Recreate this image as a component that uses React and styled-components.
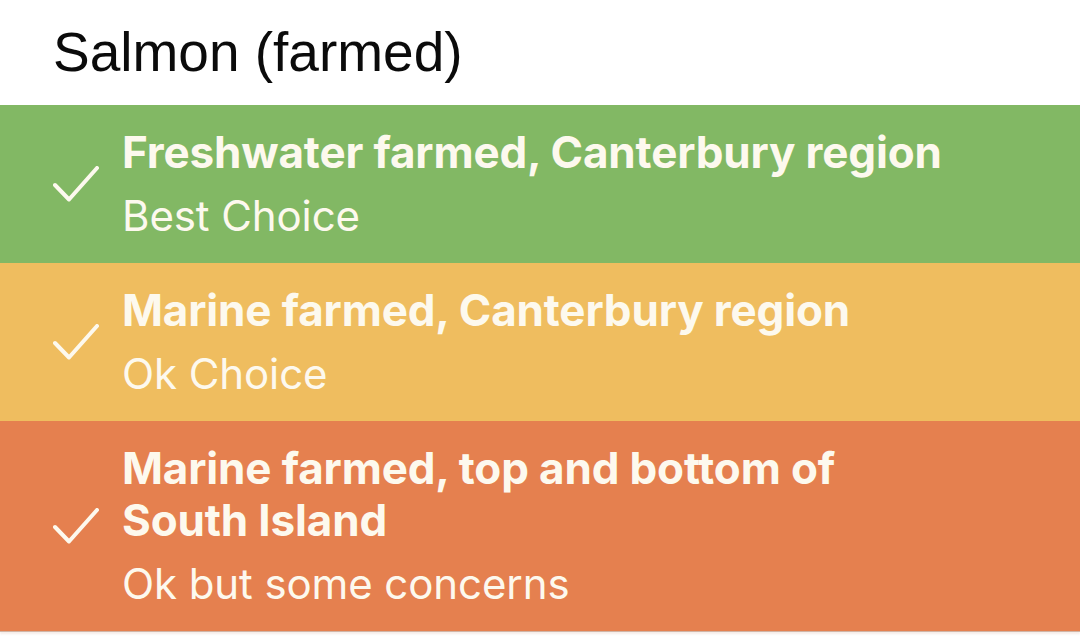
import React from "react";
import styled, { createGlobalStyle } from "styled-components";

const Global = createGlobalStyle`
  html, body { margin: 0; padding: 0; background: #ffffff; }
  body { font-family: Inter, "Liberation Sans", sans-serif; }
`;

const Page = styled.div`
  width: 1080px;
  height: 644px;
  background: #ffffff;
  overflow: hidden;
`;

const Header = styled.h1`
  margin: 0;
  padding: 22px 0 23px 53px;
  font-family: "Liberation Sans", Arial, sans-serif;
  font-weight: 400;
  font-size: 55px;
  line-height: 60px;
  color: #0b0b0b;
`;

const List = styled.div`
  display: flex;
  flex-direction: column;
  border-bottom: 1px solid rgba(150, 90, 60, 0.45);
  box-shadow: 0 2px 2px rgba(200, 150, 130, 0.18);
`;

const Row = styled.div`
  display: flex;
  align-items: center;
  background: ${(p) => p.$bg};
  padding: 21px 0 21px 53px;
  color: #fdf9ee;
`;

const CheckWrap = styled.div`
  width: 46px;
  flex: none;
  display: flex;
  align-items: center;
  margin-right: 23px;
`;

const Texts = styled.div`
  display: flex;
  flex-direction: column;
  gap: 12px;
  width: 835px;
`;

const Title = styled.div`
  font-weight: 700;
  font-size: 44px;
  line-height: 52px;
  letter-spacing: -0.15px;
`;

const Sub = styled.div`
  font-weight: 400;
  font-size: 42px;
  line-height: 52px;
  letter-spacing: -0.1px;
`;

const Check = () => (
  <svg width="46" height="36" viewBox="0 0 46 36" fill="none">
    <path
      d="M2 19 L16 33.5 L44 2"
      stroke="#fdf9ee"
      strokeWidth="4"
      strokeLinecap="round"
      strokeLinejoin="round"
    />
  </svg>
);

const rows = [
  { bg: "#82b864", title: "Freshwater farmed, Canterbury region", sub: "Best Choice" },
  { bg: "#efbd5f", title: "Marine farmed, Canterbury region", sub: "Ok Choice" },
  { bg: "#e5804f", title: "Marine farmed, top and bottom of South Island", sub: "Ok but some concerns" },
];

export default function App() {
  return (
    <Page>
      <Global />
      <Header>Salmon (farmed)</Header>
      <List>
        {rows.map((r) => (
          <Row key={r.title} $bg={r.bg}>
            <CheckWrap>
              <Check />
            </CheckWrap>
            <Texts>
              <Title>{r.title}</Title>
              <Sub>{r.sub}</Sub>
            </Texts>
          </Row>
        ))}
      </List>
    </Page>
  );
}
